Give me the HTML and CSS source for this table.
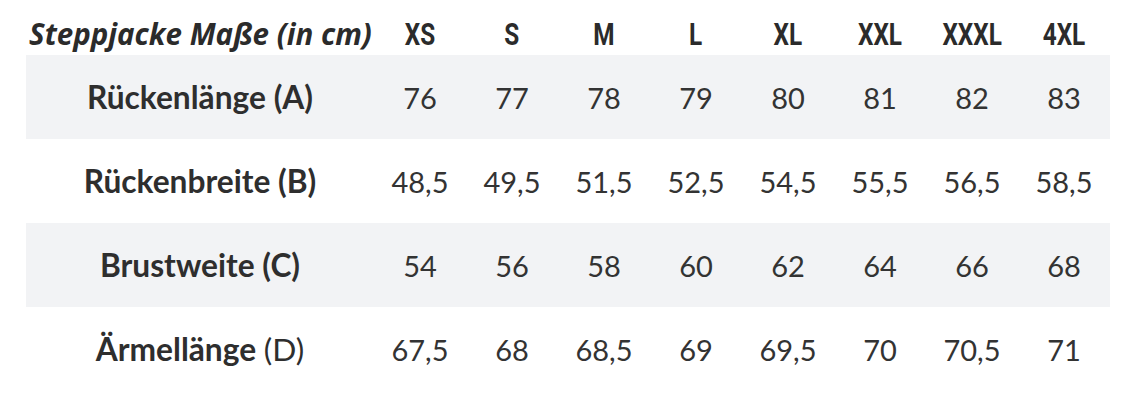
FILE: index.html
```html
<!DOCTYPE html>
<html lang="de">
<head>
<meta charset="utf-8">
<title>Steppjacke Maße</title>
<link rel="stylesheet" href="styles.css">
</head>
<body>
<table class="size-table">
  <colgroup>
    <col class="col-label">
    <col class="col-size"><col class="col-size"><col class="col-size"><col class="col-size">
    <col class="col-size"><col class="col-size"><col class="col-size"><col class="col-size">
  </colgroup>
  <thead>
    <tr class="head-row">
      <th class="title">Steppjacke Maße (in cm)</th>
      <th><span class="size">XS</span></th>
      <th><span class="size">S</span></th>
      <th><span class="size">M</span></th>
      <th><span class="size">L</span></th>
      <th><span class="size">XL</span></th>
      <th><span class="size">XXL</span></th>
      <th><span class="size">XXXL</span></th>
      <th><span class="size">4XL</span></th>
    </tr>
  </thead>
  <tbody>
    <tr class="row shaded">
      <td class="label">Rückenlänge (A)</td>
      <td>76</td><td>77</td><td>78</td><td>79</td><td>80</td><td>81</td><td>82</td><td>83</td>
    </tr>
    <tr class="row">
      <td class="label">Rückenbreite (B)</td>
      <td>48,5</td><td>49,5</td><td>51,5</td><td>52,5</td><td>54,5</td><td>55,5</td><td>56,5</td><td>58,5</td>
    </tr>
    <tr class="row shaded">
      <td class="label">Brustweite (C)</td>
      <td>54</td><td>56</td><td>58</td><td>60</td><td>62</td><td>64</td><td>66</td><td>68</td>
    </tr>
    <tr class="row">
      <td class="label">Ärmellänge <span class="light">(D)</span></td>
      <td>67,5</td><td>68</td><td>68,5</td><td>69</td><td>69,5</td><td>70</td><td>70,5</td><td>71</td>
    </tr>
  </tbody>
</table>
</body>
</html>
```
FILE: styles.css
```css
html, body {
  margin: 0;
  padding: 0;
  background: #ffffff;
}

body {
  padding: 12px 0 0 26px;
  color: #333333;
  font-family: "Lato", "Noto Sans", sans-serif;
}

.size-table {
  border-collapse: collapse;
  table-layout: fixed;
  width: 1084px;
}

.col-label { width: 348px; }
.col-size { width: 92px; }

.head-row th {
  height: 43px;
  padding: 0;
  text-align: center;
  vertical-align: middle;
}

.title {
  text-align: left !important;
  padding-left: 3px !important;
  font-family: "Open Sans", sans-serif;
  font-style: italic;
  font-weight: 700;
  font-size: 29.5px;
  color: #2b2b2b;
  white-space: nowrap;
}

.size {
  display: inline-block;
  font-family: "Roboto", sans-serif;
  font-weight: 700;
  font-size: 32px;
  color: #2b2b2b;
  transform: scaleX(0.76);
}

.row td {
  height: 84px;
  padding: 0;
  text-align: center;
  vertical-align: middle;
  font-size: 29px;
  font-weight: 400;
  color: #333333;
}

.row.shaded td {
  background: #f2f3f5;
}

.row td.label {
  font-weight: 700;
  font-size: 31.7px;
  color: #2e2e2e;
}

.light {
  font-weight: 400;
}
```
